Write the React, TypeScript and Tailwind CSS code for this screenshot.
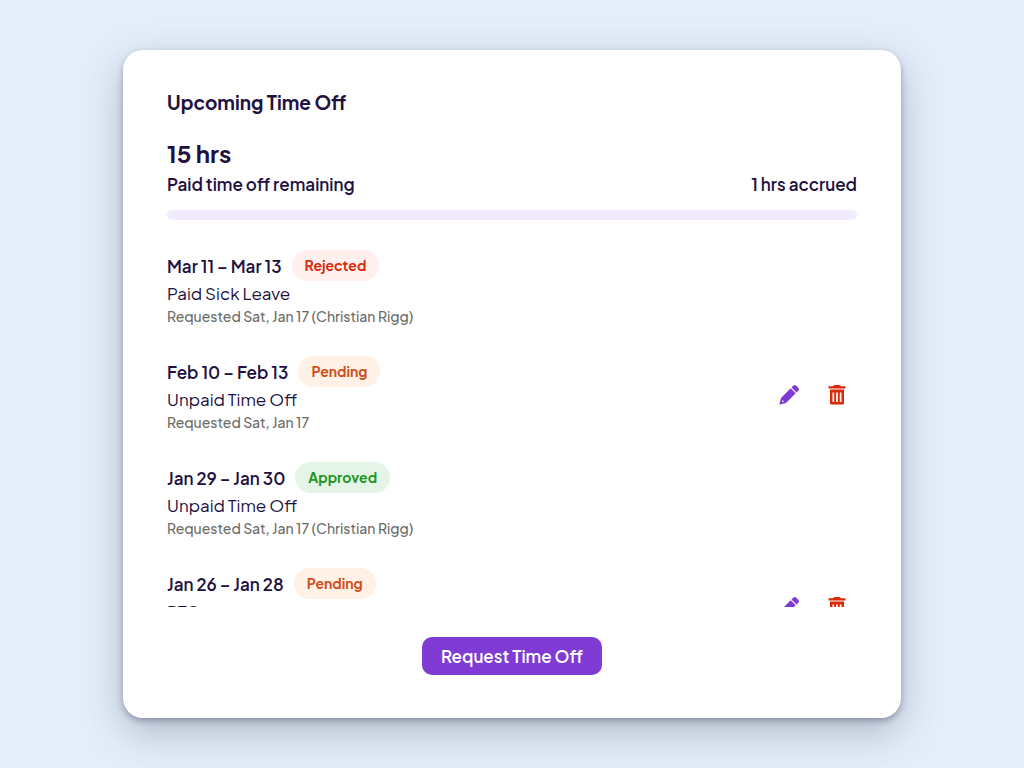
type Status = 'Rejected' | 'Pending' | 'Approved';

interface TimeOffRequest {
  id: number;
  dates: string;
  status: Status;
  policy: string;
  requested: string;
}

const REQUESTS: TimeOffRequest[] = [
  { id: 1, dates: 'Mar 11 – Mar 13', status: 'Rejected', policy: 'Paid Sick Leave', requested: 'Requested Sat, Jan 17 (Christian Rigg)' },
  { id: 2, dates: 'Feb 10 – Feb 13', status: 'Pending', policy: 'Unpaid Time Off', requested: 'Requested Sat, Jan 17' },
  { id: 3, dates: 'Jan 29 – Jan 30', status: 'Approved', policy: 'Unpaid Time Off', requested: 'Requested Sat, Jan 17 (Christian Rigg)' },
  { id: 4, dates: 'Jan 26 – Jan 28', status: 'Pending', policy: 'PTO', requested: 'Requested Sat, Jan 17' },
];

const STATUS_BADGE: Record<Status, string> = {
  Rejected: 'bg-[#fff0ed] text-[#d92b0b]',
  Pending: 'bg-[#fff1e5] text-[#cf4e1c]',
  Approved: 'bg-[#e4f5e7] text-[#23951f]',
};

function PencilIcon() {
  return (
    <svg className="h-5 w-5" viewBox="0 0 20 20" fill="currentColor" aria-hidden="true">
      <path d="M14.200.8a2.200 2.200 0 0 1 3.100 0l1.900 1.900a2.200 2.200 0 0 1 0 3.100l-1.700 1.700-5-5z" />
      <path fillRule="evenodd" d="M11.700 3.300l5 5L7 18 1.200 19.400q-.8.100-.7-.7L2 13zM3.700 15l-.7 2.100 2.100-.7z" />
    </svg>
  );
}

function TrashIcon() {
  return (
    <svg className="h-5 w-5" viewBox="0 0 20 20" fill="currentColor" aria-hidden="true">
      <path d="M7 .2q.3-.2.800-.2h4.400q.5 0 .8.200l1.200 1h4.300v2.300h-17V1.200h4.300z" />
      <path fillRule="evenodd" d="M3 4.500h14v13.500a1.500 1.500 0 0 1-1.500 1.500h-11A1.500 1.500 0 0 1 3 18zM5.500 7.500v9.500h1.700V7.500zM9.150 7.500v9.500h1.700V7.500zM12.800 7.500v9.500h1.700V7.500z" />
    </svg>
  );
}

function RequestRow({ request }: { request: TimeOffRequest }) {
  return (
    <li className="flex items-center justify-between">
      <div>
        <div className="flex items-center gap-[10px]">
          <span className="text-[17px] leading-6 font-semibold">{request.dates}</span>
          <span className={`rounded-full px-[13px] text-sm leading-[31px] font-bold ${STATUS_BADGE[request.status]}`}>
            {request.status}
          </span>
        </div>
        <p className="text-[17px] leading-6">{request.policy}</p>
        <p className="text-sm leading-[22px] font-medium text-[#6c6c68]">{request.requested}</p>
      </div>

      {request.status === 'Pending' && (
        <div className="flex gap-2">
          <button type="button" aria-label="Edit request" className="flex h-10 w-10 items-center justify-center text-[#7f3bd3]">
            <PencilIcon />
          </button>
          <button type="button" aria-label="Delete request" className="flex h-10 w-10 items-center justify-center text-[#d92b0b]">
            <TrashIcon />
          </button>
        </div>
      )}
    </li>
  );
}

export default function App() {
  return (
    <div className="flex h-screen justify-center bg-[#e4eefb] px-6 py-[50px] font-['Plus_Jakarta_Sans',Inter,sans-serif] text-[#22103f]">
      <main className="flex w-full max-w-[778px] flex-col rounded-[20px] bg-white px-11 pt-[38px] pb-[43px] shadow-[0_3px_6px_rgba(34,16,63,0.3),0_14px_40px_rgba(40,50,65,0.28)]">
        <h1 className="text-[19px] leading-7 font-bold">Upcoming Time Off</h1>

        <p className="mt-[21px] text-2xl leading-8 font-bold">15 hrs</p>
        <div className="mt-[3px] flex justify-between text-[17px] leading-6 font-semibold">
          <span>Paid time off remaining</span>
          <span>1 hrs accrued</span>
        </div>
        <div className="mt-[14px] h-[10px] shrink-0 rounded-full bg-[#f2ebfe]" />

        <ul className="mt-[30px] flex min-h-0 flex-1 flex-col gap-[29px] overflow-y-auto [scrollbar-width:none]">
          {REQUESTS.map((r) => (
            <RequestRow key={r.id} request={r} />
          ))}
        </ul>

        <button
          type="button"
          className="mt-[30px] self-center rounded-[10px] bg-[#7f3bd3] px-[19px] text-[17px] leading-[38px] font-semibold text-white"
        >
          Request Time Off
        </button>
      </main>
    </div>
  );
}
